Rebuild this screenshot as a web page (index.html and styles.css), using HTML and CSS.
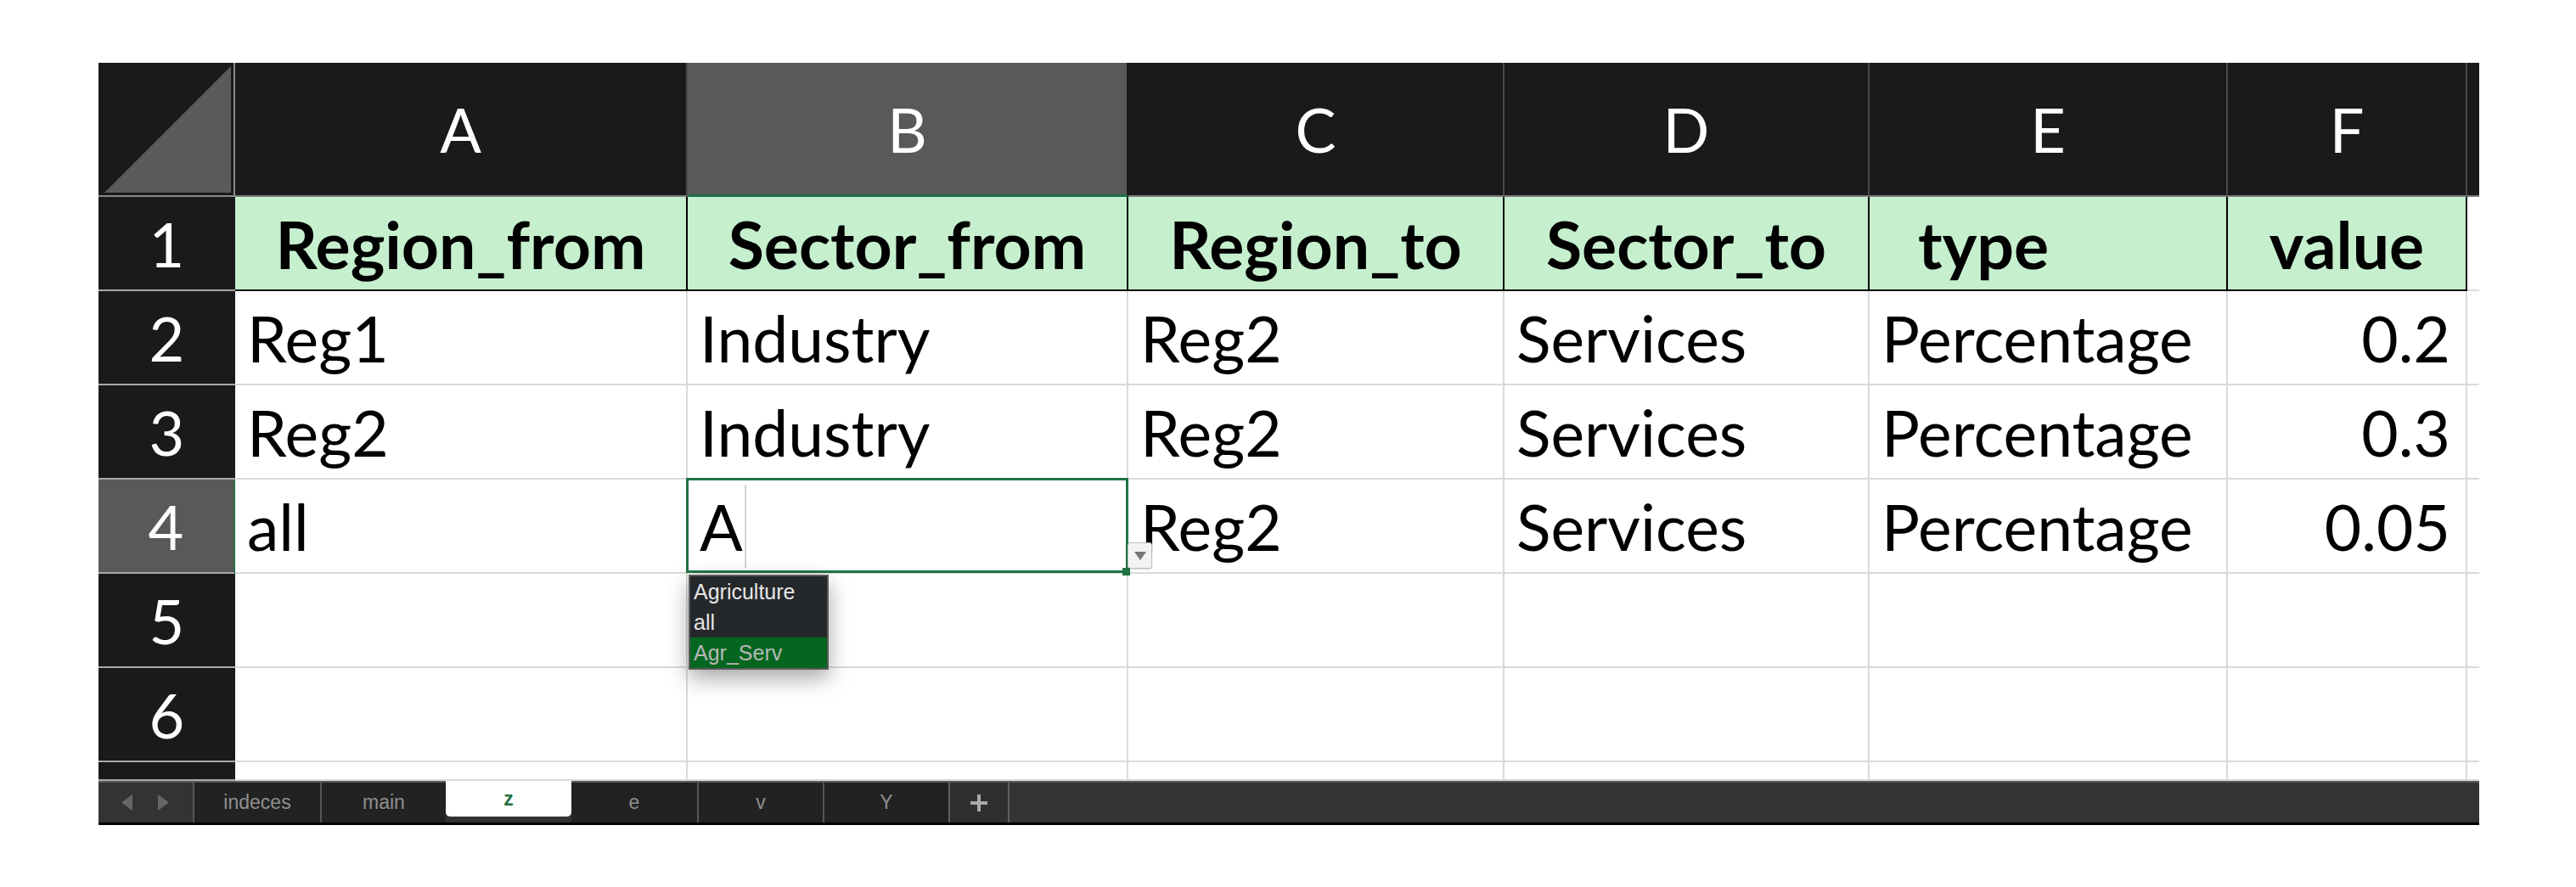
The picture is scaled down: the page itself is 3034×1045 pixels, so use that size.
FILE: index.html
```html
<!DOCTYPE html>
<html lang="en">

<head>
    <meta charset="UTF-8">
    <meta name="viewport" content="width=device-width, initial-scale=1.0">
    <title>Sheet z</title>
    <link rel="stylesheet" href="styles.css">
</head>

<body>
    <div class="sheet">
        <div class="grid">
            <!-- column headers -->
            <div class="corner">
                <svg width="159" height="156" viewBox="0 0 159 156">
                    <polygon points="156,4 7,153 156,153" fill="#5a5a5a" />
                </svg>
            </div>
            <div class="col-head">A</div>
            <div class="col-head sel">B</div>
            <div class="col-head">C</div>
            <div class="col-head">D</div>
            <div class="col-head">E</div>
            <div class="col-head">F</div>
            <div class="col-head edge"></div>

            <!-- row 1 -->
            <div class="row-head">1</div>
            <div class="cell hdr">Region_from</div>
            <div class="cell hdr">Sector_from</div>
            <div class="cell hdr">Region_to</div>
            <div class="cell hdr">Sector_to</div>
            <div class="cell hdr left">type</div>
            <div class="cell hdr">value</div>
            <div class="cell edge"></div>

            <!-- row 2 -->
            <div class="row-head">2</div>
            <div class="cell">Reg1</div>
            <div class="cell">Industry</div>
            <div class="cell">Reg2</div>
            <div class="cell">Services</div>
            <div class="cell">Percentage</div>
            <div class="cell num">0.2</div>
            <div class="cell edge"></div>

            <!-- row 3 -->
            <div class="row-head">3</div>
            <div class="cell">Reg2</div>
            <div class="cell">Industry</div>
            <div class="cell">Reg2</div>
            <div class="cell">Services</div>
            <div class="cell">Percentage</div>
            <div class="cell num">0.3</div>
            <div class="cell edge"></div>

            <!-- row 4, B4 is being edited -->
            <div class="row-head sel">4</div>
            <div class="cell">all</div>
            <div class="cell active">A<span class="caret"></span>
                <div class="drop-btn">
                    <svg width="14" height="10" viewBox="0 0 14 10">
                        <polygon points="0,0 14,0 7,10" fill="#777" />
                    </svg>
                </div>
                <div class="handle"></div>
                <ul class="suggest">
                    <li>Agriculture</li>
                    <li>all</li>
                    <li class="on">Agr_Serv</li>
                </ul>
            </div>
            <div class="cell">Reg2</div>
            <div class="cell">Services</div>
            <div class="cell">Percentage</div>
            <div class="cell num">0.05</div>
            <div class="cell edge"></div>

            <!-- rows 5 - 7 -->
            <div class="row-head">5</div>
            <div class="cell"></div>
            <div class="cell"></div>
            <div class="cell"></div>
            <div class="cell"></div>
            <div class="cell"></div>
            <div class="cell"></div>
            <div class="cell edge"></div>

            <div class="row-head">6</div>
            <div class="cell"></div>
            <div class="cell"></div>
            <div class="cell"></div>
            <div class="cell"></div>
            <div class="cell"></div>
            <div class="cell"></div>
            <div class="cell edge"></div>

            <div class="row-head"></div>
            <div class="cell"></div>
            <div class="cell"></div>
            <div class="cell"></div>
            <div class="cell"></div>
            <div class="cell"></div>
            <div class="cell"></div>
            <div class="cell edge"></div>
        </div>

        <div class="tabbar">
            <div class="nav">
                <svg width="13" height="19" viewBox="0 0 13 19">
                    <polygon points="13,0 0,9.5 13,19" fill="#666" />
                </svg>
                <svg width="13" height="19" viewBox="0 0 13 19">
                    <polygon points="0,0 13,9.5 0,19" fill="#666" />
                </svg>
            </div>
            <div class="tab">indeces</div>
            <div class="tab">main</div>
            <div class="tab active">z</div>
            <div class="tab">e</div>
            <div class="tab">v</div>
            <div class="tab">Y</div>
            <div class="add">
                <svg width="20" height="20" viewBox="0 0 20 20">
                    <rect x="0" y="8" width="20" height="4" fill="#aaa" />
                    <rect x="8" y="0" width="4" height="20" fill="#aaa" />
                </svg>
            </div>
            <div class="rest"></div>
        </div>
    </div>
</body>

</html>
```

FILE: styles.css
```css
* {
    box-sizing: border-box;
}

body {
    margin: 0;
    background-color: #fff;
    font-family: Lato, "Open Sans", sans-serif;
}

.sheet {
    width: 2804px;
    margin: 74px 0 0 116px;
}

.grid {
    display: grid;
    grid-template-columns: 161px 533px 519px 443px 430px 422px 282px 14px;
    grid-template-rows: 158px repeat(6, 111px) 22px;
}

/* headers */

.corner {
    background-color: #1a1a1a;
    border-right: 2px solid #8a8a8a;
    border-bottom: 2px solid #8a8a8a;
}

.corner svg {
    display: block;
}

.col-head {
    display: flex;
    justify-content: center;
    align-items: center;
    background-color: #1a1a1a;
    color: #fff;
    font-size: 72px;
    border-right: 2px solid #4a4a4a;
    border-bottom: 2px solid #7a7a7a;
}

.col-head.sel {
    background-color: #595959;
    border-right-color: #1a1a1a;
    border-bottom: 3px solid #1e7145;
}

.col-head.edge {
    border-right: none;
}

.row-head {
    display: flex;
    justify-content: center;
    align-items: center;
    background-color: #1a1a1a;
    color: #fff;
    font-size: 72px;
    border-bottom: 2px solid #a8a8a8;
}

.row-head.sel {
    background-color: #595959;
    border-right: 2px solid #1e7145;
}

/* cells */

.cell {
    display: flex;
    align-items: center;
    padding: 0 14px;
    font-size: 75px;
    color: #000;
    white-space: nowrap;
    overflow: hidden;
    border-right: 2px solid #dadada;
    border-bottom: 2px solid #dadada;
}

.cell.hdr {
    justify-content: center;
    font-size: 77px;
    font-weight: 700;
    background-color: #c6efce;
    border-right-color: #000;
    border-bottom-color: #000;
}

.cell.hdr.left {
    justify-content: flex-start;
    padding-left: 57px;
}

.cell.num {
    justify-content: flex-end;
    padding-right: 18px;
}

.cell.edge {
    padding: 0;
    border-right: none;
}

/* B4 in edit mode */

.cell.active {
    position: relative;
    overflow: visible;
    z-index: 2;
}

.cell.active::after {
    content: '';
    position: absolute;
    left: -2px;
    top: -2px;
    right: -2px;
    bottom: -1px;
    border: 3px solid #217346;
    pointer-events: none;
}

.caret {
    width: 2px;
    height: 98px;
    margin-left: 2px;
    background-color: #d4d4d4;
}

.handle {
    position: absolute;
    right: -4px;
    bottom: -4px;
    width: 9px;
    height: 9px;
    background-color: #217346;
    z-index: 3;
}

.drop-btn {
    position: absolute;
    right: -30px;
    bottom: 4px;
    width: 29px;
    height: 31px;
    display: flex;
    justify-content: center;
    align-items: center;
    background-color: #f3f3f3;
    border: 1px solid #bdbdbd;
    border-radius: 3px;
    box-shadow: 0 1px 2px rgba(0, 0, 0, 0.15);
    z-index: 3;
}

.suggest {
    position: absolute;
    left: 1px;
    top: 112px;
    width: 165px;
    margin: 0;
    padding: 0;
    list-style: none;
    background-color: #25282a;
    border: 2px solid #5a5a5a;
    box-shadow: 0 10px 24px rgba(0, 0, 0, 0.35);
    font-family: "Liberation Sans", Arial, sans-serif;
    font-size: 25px;
    z-index: 4;
}

.suggest li {
    height: 36px;
    line-height: 36px;
    padding-left: 4px;
    color: #e6e6e6;
}

.suggest li.on {
    background-color: #04661f;
    color: #b8b8b8;
}

/* sheet tabs */

.tabbar {
    display: flex;
    height: 52px;
    background-color: #333;
    border-top: 2px solid #5a5a5a;
    border-bottom: 3px solid #000;
    font-family: "Liberation Sans", Arial, sans-serif;
    font-size: 23px;
    color: #8f8f8f;
}

.nav {
    display: flex;
    align-items: center;
    gap: 30px;
    width: 113px;
    padding-left: 27px;
    border-right: 2px solid #555;
}

.tab {
    display: flex;
    justify-content: center;
    align-items: center;
    width: 148px;
    background-color: #222;
}

.tab+.tab {
    border-left: 2px solid #555;
}

.tab.active {
    margin-top: -2px;
    margin-bottom: 7px;
    background-color: #fff;
    border-left: none;
    border-radius: 0 0 5px 5px;
    color: #1e7145;
    font-weight: 700;
}

.tab.active+.tab {
    border-left: none;
}

.add {
    display: flex;
    justify-content: center;
    align-items: center;
    width: 72px;
    border-left: 2px solid #5f5f5f;
    border-right: 2px solid #5f5f5f;
    background-color: #2f2f2f;
}

.rest {
    flex: 1;
}
```
